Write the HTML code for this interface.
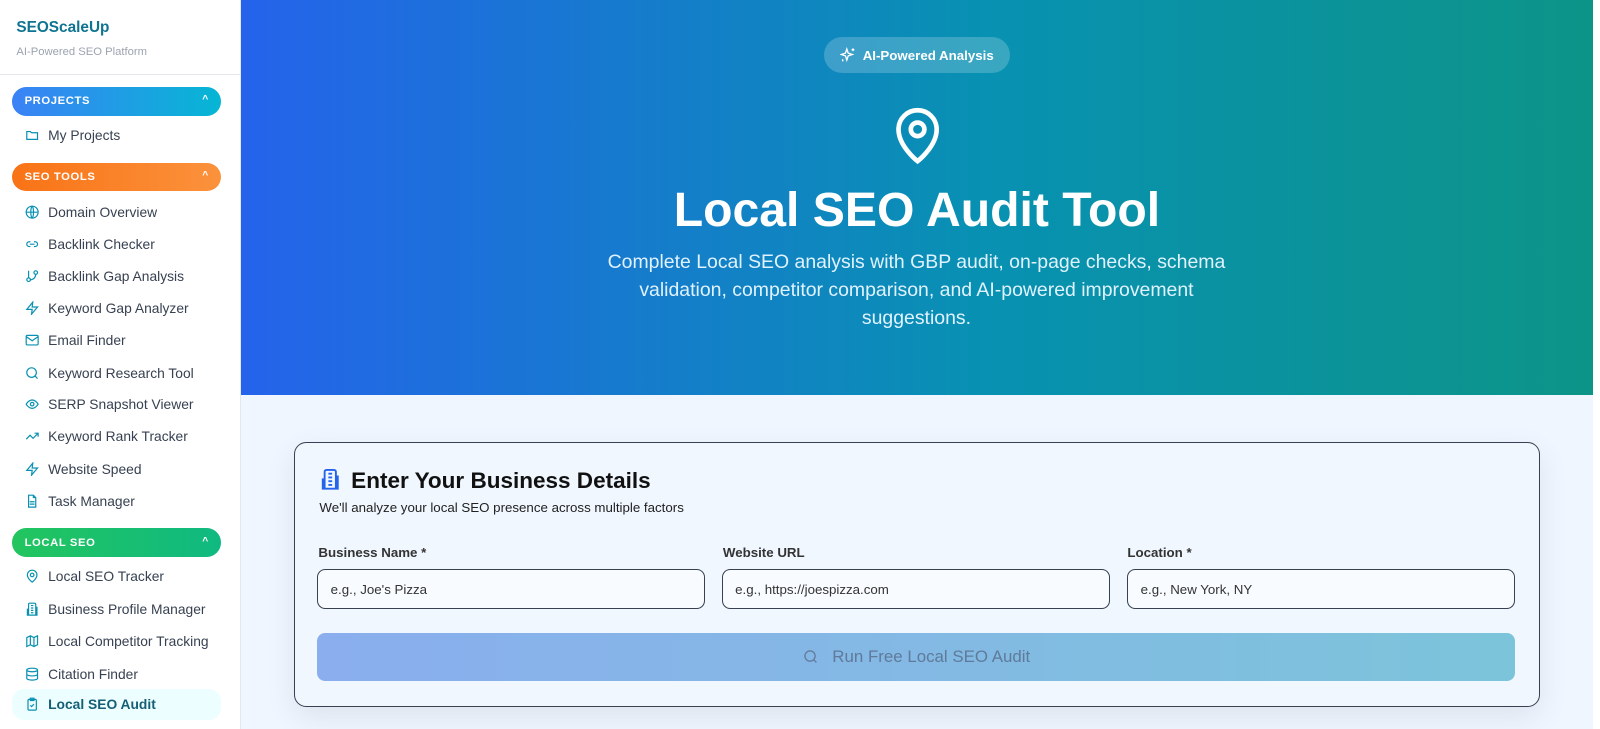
<!DOCTYPE html>
<html><head><meta charset="utf-8"><style>
*{box-sizing:border-box;margin:0;padding:0}
html{width:1600px;height:729px;overflow:hidden;background:#fff}
body{zoom:1.024;width:1563px;height:712px;overflow:hidden;font-family:"Liberation Sans",sans-serif;background:#fff;position:relative}
.sb{position:absolute;left:0;top:0;width:235px;height:729px;background:#fff;border-right:1px solid #e5e7eb}
.logo{padding:19px 0 0 16px;height:73px;border-bottom:1px solid #e5e7eb}
.logo b{display:block;color:#0e7490;font-size:15px}
.logo span{display:block;color:#9ca3af;font-size:11px;margin-top:8px}
.hd{position:absolute;left:12px;width:204px;height:28px;border-radius:14px;color:#fff;font-size:11px;font-weight:bold;letter-spacing:.6px;padding:8px 0 0 12px}
.hd i{position:absolute;right:12px;top:7px;font-style:normal;font-size:10px}
.it{position:absolute;left:12px;width:204px;height:30px;font-size:13.5px;color:#374151;padding:7px 0 0 35px}
.it svg{position:absolute;left:12px;top:8px}
.act{background:#ecfeff;border-radius:12px;color:#155e75;font-weight:bold}
.main{position:absolute;left:235px;top:0;width:1321px;height:729px;background:#eff6ff}
.hero{position:absolute;left:0;top:0;width:1321px;height:386px;background:linear-gradient(90deg,#2563eb,#0891b2 55%,#0d9488);color:#fff;text-align:center}
.pill{position:absolute;left:570px;top:36px;width:181px;height:35px;border-radius:18px;background:rgba(255,255,255,.2);font-size:13px;font-weight:bold;padding:11px 0 0 22px}
.pill svg{position:absolute;left:15px;top:10px}
h1{position:absolute;left:0;width:100%;top:178px;font-size:47px;font-weight:bold}
.sub{position:absolute;left:355px;width:610px;top:242px;font-size:19px;line-height:27.5px;color:#e0f2fe}
.card{position:absolute;left:52px;top:432px;width:1217px;height:258px;border:1px solid #374151;border-radius:12px;background:#f0f7ff;box-shadow:0 10px 30px rgba(0,0,0,.08)}
.ct{position:absolute;left:55px;top:24px;font-size:22px;font-weight:bold;color:#111}
.cs{position:absolute;left:24px;top:55px;font-size:13px;color:#222}
.lb{position:absolute;top:99px;font-size:13px;color:#333;font-weight:bold}
.in{position:absolute;top:123px;width:379px;height:39px;border:1px solid #374151;border-radius:8px;background:#f8fbff;font-size:13px;color:#333;padding:11px 0 0 12px}
.btn{position:absolute;left:22px;top:185px;width:1170px;height:47px;border-radius:8px;background:linear-gradient(90deg,#8aaeee,#7cc4da);color:#5f7a9a;font-size:16.5px;text-align:center;padding:14px 0 0 0}
</style></head><body>
<div class="sb">
<div class="logo"><b>SEOScaleUp</b><span>AI-Powered SEO Platform</span></div>
<div class="hd" style="top:85px;background:linear-gradient(90deg,#3b82f6,#06b6d4)">PROJECTS<i>^</i></div>
<div class="it" style="top:117px"><svg width="14" height="14" viewBox="0 0 24 24" fill="none" stroke="#0891b2" stroke-width="2"><path d="M3 6h6l2 2h10v11H3z"/></svg>My Projects</div>
<div class="hd" style="top:159px;background:linear-gradient(90deg,#f97316,#fb923c)">SEO TOOLS<i>^</i></div>
<div class="it" style="top:192px"><svg width="14" height="14" viewBox="0 0 24 24" fill="none" stroke="#0891b2" stroke-width="2"><circle cx="12" cy="12" r="10"/><path d="M2 12h20M12 2c3 3 3 17 0 20M12 2c-3 3-3 17 0 20"/></svg>Domain Overview</div>
<div class="it" style="top:223px"><svg width="14" height="14" viewBox="0 0 24 24" fill="none" stroke="#0891b2" stroke-width="2"><path d="M9 8H7a4 4 0 000 8h2M15 8h2a4 4 0 010 8h-2M8 12h8"/></svg>Backlink Checker</div>
<div class="it" style="top:255px"><svg width="14" height="14" viewBox="0 0 24 24" fill="none" stroke="#0891b2" stroke-width="2"><circle cx="6" cy="18" r="3"/><circle cx="18" cy="6" r="3"/><path d="M6 3v12M18 9a9 9 0 01-9 9"/></svg>Backlink Gap Analysis</div>
<div class="it" style="top:286px"><svg width="14" height="14" viewBox="0 0 24 24" fill="none" stroke="#0891b2" stroke-width="2"><path d="M13 2L3 14h9l-1 8 10-12h-9z"/></svg>Keyword Gap Analyzer</div>
<div class="it" style="top:317px"><svg width="14" height="14" viewBox="0 0 24 24" fill="none" stroke="#0891b2" stroke-width="2"><rect x="2" y="4" width="20" height="16" rx="2"/><path d="M2 6l10 7 10-7"/></svg>Email Finder</div>
<div class="it" style="top:349px"><svg width="14" height="14" viewBox="0 0 24 24" fill="none" stroke="#0891b2" stroke-width="2"><circle cx="11" cy="11" r="8"/><path d="M21 21l-4.3-4.3"/></svg>Keyword Research Tool</div>
<div class="it" style="top:380px"><svg width="14" height="14" viewBox="0 0 24 24" fill="none" stroke="#0891b2" stroke-width="2"><path d="M2 12s4-7 10-7 10 7 10 7-4 7-10 7S2 12 2 12z"/><circle cx="12" cy="12" r="3"/></svg>SERP Snapshot Viewer</div>
<div class="it" style="top:411px"><svg width="14" height="14" viewBox="0 0 24 24" fill="none" stroke="#0891b2" stroke-width="2"><path d="M22 7l-8.5 8.5-5-5L2 17M16 7h6v6"/></svg>Keyword Rank Tracker</div>
<div class="it" style="top:443px"><svg width="14" height="14" viewBox="0 0 24 24" fill="none" stroke="#0891b2" stroke-width="2"><path d="M13 2L3 14h9l-1 8 10-12h-9z"/></svg>Website Speed</div>
<div class="it" style="top:474px"><svg width="14" height="14" viewBox="0 0 24 24" fill="none" stroke="#0891b2" stroke-width="2"><path d="M14 2H6v20h12V6z M14 2v4h4M8 13h8M8 17h8"/></svg>Task Manager</div>
<div class="hd" style="top:516px;background:linear-gradient(90deg,#22c55e,#10b981)">LOCAL SEO<i>^</i></div>
<div class="it" style="top:548px"><svg width="14" height="14" viewBox="0 0 24 24" fill="none" stroke="#0891b2" stroke-width="2"><path d="M20 10c0 6-8 12-8 12S4 16 4 10a8 8 0 0116 0z"/><circle cx="12" cy="10" r="3"/></svg>Local SEO Tracker</div>
<div class="it" style="top:580px"><svg width="14" height="14" viewBox="0 0 24 24" fill="none" stroke="#0891b2" stroke-width="2"><path d="M6 22V4a2 2 0 012-2h8a2 2 0 012 2v18zM6 12H4v10h2M18 9h2v13h-2M10 6h4M10 10h4M10 14h4M10 18h4"/></svg>Business Profile Manager</div>
<div class="it" style="top:611px"><svg width="14" height="14" viewBox="0 0 24 24" fill="none" stroke="#0891b2" stroke-width="2"><path d="M3 6l6-3 6 3 6-3v15l-6 3-6-3-6 3zM9 3v15M15 6v15"/></svg>Local Competitor Tracking</div>
<div class="it" style="top:643px"><svg width="14" height="14" viewBox="0 0 24 24" fill="none" stroke="#0891b2" stroke-width="2"><ellipse cx="12" cy="5" rx="9" ry="3"/><path d="M3 5v14c0 1.7 4 3 9 3s9-1.3 9-3V5M3 12c0 1.7 4 3 9 3s9-1.3 9-3"/></svg>Citation Finder</div>
<div class="it act" style="top:673px"><svg width="14" height="14" viewBox="0 0 24 24" fill="none" stroke="#0891b2" stroke-width="2"><rect x="5" y="4" width="14" height="18" rx="2"/><path d="M9 2h6v4H9zM9 14l2 2 4-4"/></svg>Local SEO Audit</div>
</div>
<div class="main">
<div class="hero">
<div class="pill"><svg width="16" height="16" viewBox="0 0 24 24" fill="none" stroke="#fff" stroke-width="2"><path d="M10 3l2 6 6 2-6 2-2 6-2-6-6-2 6-2z M19 2v4M17 4h4M4 18v3"/></svg>AI-Powered Analysis</div>
<svg style="position:absolute;left:636px;top:104px" width="50" height="58" viewBox="0 0 24 28" fill="none" stroke="#fff" stroke-width="2.2"><path d="M21 11c0 8-9 15-9 15S3 19 3 11a9 9 0 0118 0z"/><circle cx="12" cy="11" r="3.2"/></svg>
<h1>Local SEO Audit Tool</h1>
<div class="sub">Complete Local SEO analysis with GBP audit, on-page checks, schema validation, competitor comparison, and AI-powered improvement suggestions.</div>
</div>
<div class="card">
<svg style="position:absolute;left:24px;top:24px" width="22" height="22" viewBox="0 0 24 24" fill="none" stroke="#2563eb" stroke-width="2"><path d="M6 22V4a2 2 0 012-2h8a2 2 0 012 2v18zM6 12H4v10h2M18 9h2v13h-2M10 6h4M10 10h4M10 14h4M10 18h4"/></svg>
<div class="ct">Enter Your Business Details</div>
<div class="cs">We'll analyze your local SEO presence across multiple factors</div>
<div class="lb" style="left:23px">Business Name *</div>
<div class="lb" style="left:418px">Website URL</div>
<div class="lb" style="left:813px">Location *</div>
<div class="in" style="left:22px">e.g., Joe's Pizza</div>
<div class="in" style="left:417px">e.g., https://joespizza.com</div>
<div class="in" style="left:813px">e.g., New York, NY</div>
<div class="btn"><svg style="vertical-align:-2px;margin-right:14px" width="15" height="15" viewBox="0 0 24 24" fill="none" stroke="#5f7a9a" stroke-width="2"><circle cx="11" cy="11" r="8"/><path d="M21 21l-4.3-4.3"/></svg>Run Free Local SEO Audit</div>
</div>
</div>
</body></html>
